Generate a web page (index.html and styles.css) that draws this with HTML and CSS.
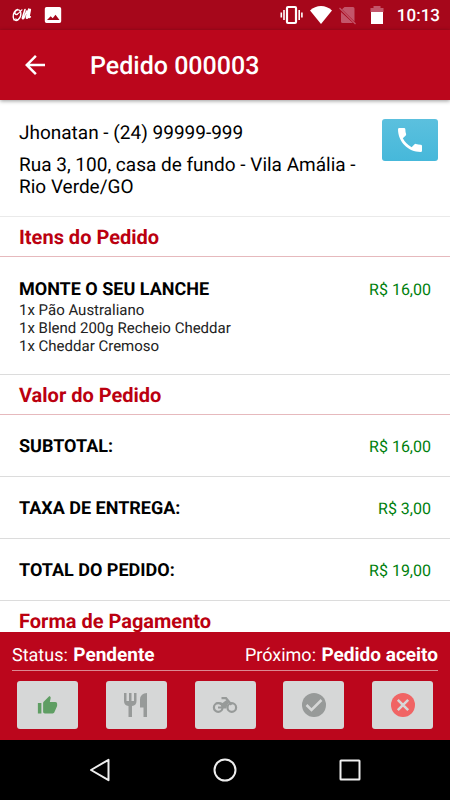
FILE: index.html
```html
<!DOCTYPE html>
<html lang="pt-BR">
<head>
<meta charset="utf-8">
<meta name="viewport" content="width=device-width, initial-scale=1">
<title>Pedido 000003</title>
<link rel="stylesheet" href="styles.css">
</head>
<body>
<div class="screen">
  <div class="status-bar">
    <div class="status-group">
      <svg class="logo" viewBox="0 0 20 16" fill="none" stroke="#fff" stroke-linecap="round" stroke-linejoin="round" aria-hidden="true">
        <path stroke-width="1.400" d="M5.500 2.500C3 3 1 6.500 1.200 10c.2 3.300 2.800 4.300 5 2.600C8.800 10.600 9.500 6.500 8.300 4 7.300 2.200 4.500 2.600 3.300 4.500 2.200 6.500 3.400 8 5.200 7.300"/>
        <path stroke-width="1.100" d="M5.200 7.300C7.500 6 8.500 4 10 2.800M1.800 12.800q2-1.500 3.500 0"/>
        <path stroke-width="1.600" d="M13 2.500 10.500 10.500c-.3 1.500.8 1.600 1.500.3L14.800 4M16.800 2 14.500 10c-.3 1.500.8 1.600 1.500.3L18.300 2.500 17 9.500c-.2 1 .5 1.200 1.300.3"/>
      </svg>
      <svg class="photo" viewBox="0 0 18 18" aria-hidden="true">
        <path fill="#fff" fill-rule="evenodd" d="M2.500 1h13A1.700 1.700 0 0 1 17.200 2.700v12.600a1.700 1.700 0 0 1-1.700 1.700h-13A1.700 1.700 0 0 1 .8 15.300V2.700A1.700 1.700 0 0 1 2.500 1zM3 14h12.500l-4-5.300-2.800 3.500-2-2z"/>
      </svg>
    </div>
    <div class="status-group status-right">
      <svg class="sys" viewBox="0 0 24 20" aria-hidden="true">
        <rect x="8" y="2" width="9" height="16" rx="1" fill="none" stroke="#fff" stroke-width="2.200"/>
        <path d="M5 5v10M20.200 5v10M2.300 7.500v5M22.900 7.500v5" stroke="#fff" stroke-width="1.600"/>
      </svg>
      <svg class="sys" viewBox="0 0 24 20" aria-hidden="true"><path fill="#fff" d="M2 5.500C8-.5 18-.5 24 5.500L13 19z"/></svg>
      <svg class="sys" viewBox="0 0 24 20" aria-hidden="true">
        <path fill="#c3566a" d="M7.500 2H16q1.500 0 1.500 1.500v13L5 4.200zM4 7l12 11H5.500Q4 18 4 16.500z"/>
        <path d="m2.500 3 16 16" stroke="#c3566a" stroke-width="1.300"/>
      </svg>
      <svg class="sys" viewBox="0 0 24 20" aria-hidden="true">
        <path fill="#c3566a" d="M7.500 1h7v2h3v4h-13V3h3z"/><path fill="#fff" d="M5 7h12v12H5z"/>
      </svg>
      <time class="clock">10:13</time>
    </div>
  </div>
  <header class="app-bar">
    <button class="back" type="button" aria-label="Voltar">
      <svg viewBox="0 0 24 24" aria-hidden="true"><path fill="#fff" d="M20 11H7.830l5.590-5.590L12 4l-8 8 8 8 1.410-1.410L7.830 13H20z"/></svg>
    </button>
    <h1>Pedido 000003</h1>
  </header>
  <main class="content">
    <section class="customer">
      <div class="customer-text">
        <p>Jhonatan - (24) 99999-999</p>
        <p>Rua 3, 100, casa de fundo - Vila Amália - Rio Verde/GO</p>
      </div>
      <button class="call" type="button" aria-label="Ligar">
        <svg viewBox="0 0 24 24" aria-hidden="true"><path fill="#fff" d="M20 15.500c-1.250 0-2.450-.2-3.570-.57a1 1 0 0 0-1.020.24l-2.200 2.200a15.050 15.050 0 0 1-6.590-6.590l2.200-2.210a.96.96 0 0 0 .25-1A11.360 11.360 0 0 1 8.500 4a1 1 0 0 0-1-1H4a1 1 0 0 0-1 1c0 9.390 7.610 17 17 17a1 1 0 0 0 1-1v-3.500a1 1 0 0 0-1-1z"/></svg>
      </button>
    </section>
    <section>
      <h2>Itens do Pedido</h2>
      <div class="row item">
        <div>
          <h3>MONTE O SEU LANCHE</h3>
          <ul>
            <li>1x Pão Australiano</li>
            <li>1x Blend 200g Recheio Cheddar</li>
            <li>1x Cheddar Cremoso</li>
          </ul>
        </div>
        <span class="price">R$ 16,00</span>
      </div>
    </section>
    <section>
      <h2>Valor do Pedido</h2>
      <div class="row"><h3>SUBTOTAL:</h3><span class="price">R$ 16,00</span></div>
      <div class="row"><h3>TAXA DE ENTREGA:</h3><span class="price">R$ 3,00</span></div>
      <div class="row"><h3>TOTAL DO PEDIDO:</h3><span class="price">R$ 19,00</span></div>
    </section>
    <section>
      <h2>Forma de Pagamento</h2>
    </section>
  </main>
  <footer class="order-status">
    <div class="status-line">
      <span>Status: <strong>Pendente</strong></span>
      <span>Próximo: <strong>Pedido aceito</strong></span>
    </div>
    <div class="actions">
      <button type="button" aria-label="Aceitar pedido">
        <svg class="small" viewBox="0 0 24 24" aria-hidden="true"><path fill="#5f9e63" d="M1 21h4V9H1v12zm22-11a2 2 0 0 0-2-2h-6.310l.95-4.570.03-.32c0-.41-.17-.79-.44-1.060L14.170 1 7.590 7.590A1.950 1.950 0 0 0 7 9v10c0 1.100.9 2 2 2h9c.83 0 1.540-.5 1.840-1.220l3.020-7.050c.09-.23.14-.47.14-.73v-2z"/></svg>
      </button>
      <button type="button" aria-label="Em preparo">
        <svg viewBox="0 0 24 24" aria-hidden="true"><path fill="#979a99" d="M0 0h2.500v8H5V0h2.500v8H10V0h2.500v8q0 4.500-4.500 5v11H4.500V13Q0 12.500 0 8zM23 0v24h-3.500v-9.500H16V6.500Q16.500 0 23 0z"/></svg>
      </button>
      <button type="button" aria-label="Saiu para entrega">
        <svg class="moto" viewBox="0 0 26 24" fill="none" stroke="#979a99" stroke-width="2.200" aria-hidden="true">
          <circle cx="6.200" cy="14.500" r="4.300"/><circle cx="19.800" cy="14.500" r="4.300"/>
          <path d="M6 14.500h4.500M9.500 5.200h4.500l5.500 6.500"/>
          <path fill="#979a99" stroke="none" d="M3 9.200h6l1.500.8L14.500 7l2.500 2.500q-2 2-2.800 6H10.500Q10 11.500 6 10.500z"/>
        </svg>
      </button>
      <button type="button" aria-label="Concluir pedido">
        <svg viewBox="0 0 24 24" aria-hidden="true"><circle cx="12" cy="12" r="12" fill="#979a99"/><path d="m4.500 12 5 5L19.500 7" fill="none" stroke="#d6d7d7" stroke-width="2.500"/></svg>
      </button>
      <button type="button" aria-label="Cancelar pedido">
        <svg viewBox="0 0 24 24" aria-hidden="true"><circle cx="12" cy="12" r="12" fill="#f06464"/><path d="m6.800 6.800 10.400 10.400M17.200 6.800 6.800 17.200" fill="none" stroke="#d6d7d7" stroke-width="2.500"/></svg>
      </button>
    </div>
  </footer>
  <nav class="nav-bar" aria-label="Sistema">
    <button type="button" aria-label="Voltar"><svg viewBox="0 0 24 24" aria-hidden="true"><path d="M3 12 20.500 1.800v20.400z"/></svg></button>
    <button type="button" aria-label="Início"><svg viewBox="0 0 24 24" aria-hidden="true"><circle cx="12" cy="12" r="10.500"/></svg></button>
    <button type="button" aria-label="Recentes"><svg viewBox="0 0 24 24" aria-hidden="true"><rect x="2.500" y="2.500" width="19" height="19" rx=".5"/></svg></button>
  </nav>
</div>
</body>
</html>
```

FILE: styles.css
```css
* { box-sizing: border-box; }

body {
  margin: 0;
  background: #fff;
  color: #000;
  font-family: Roboto, "Noto Sans", sans-serif;
  font-size: 18px;
  line-height: 22px;
  text-rendering: geometricPrecision;
}

h1, h2, h3, p, ul { margin: 0; padding: 0; }
ul { list-style: none; }
button { border: 0; padding: 0; font: inherit; cursor: pointer; }
svg { display: block; }

.screen {
  display: flex;
  flex-direction: column;
  height: 100vh;
  overflow: hidden;
}

.status-bar {
  display: flex;
  flex: none;
  justify-content: space-between;
  padding: 0 10px 0 12px;
  height: 30px;
  background: #a6071b;
  color: #fff;
}

.status-group { display: flex; align-items: center; gap: 12px; }
.status-right { gap: 5px; }
.logo { width: 20px; height: 16px; }
.photo { width: 18px; height: 18px; }
.sys { width: 24px; height: 20px; }
.clock { margin-left: 2px; padding-top: 2px; font-size: 17px; font-weight: 500; }

.app-bar {
  display: flex;
  flex: none;
  align-items: center;
  gap: 40px;
  height: 70px;
  padding: 0 20px;
  background: #bb061c;
  color: #fff;
  box-shadow: 0 1px 4px rgba(0, 0, 0, .4);
  z-index: 1;
}

.back { background: none; }
.back svg { width: 30px; height: 30px; }
h1 { padding-top: 3px; font-size: 25px; line-height: 30px; font-weight: 500; }

.content { flex: 1; min-height: 0; overflow: hidden; }

.customer {
  display: flex;
  justify-content: space-between;
  align-items: flex-start;
  gap: 12px;
  padding: 19px 12px 18px 19px;
  border-bottom: 1px solid #eaeaea;
}

.customer-text { flex: 1; padding-top: 3px; font-size: 19px; }
.customer-text p + p { margin-top: 10px; }

.call {
  display: grid;
  place-items: center;
  flex: none;
  width: 56px;
  height: 42px;
  border-radius: 3px;
  background: linear-gradient(#5bc0de, #46b8da);
}
.call svg { width: 32px; height: 32px; }

h2 {
  padding: 9px 19px 7px;
  border-bottom: 1px solid #e6b9bd;
  color: #bb0010;
  font-size: 20px;
  line-height: 23px;
  font-weight: 700;
}

.row {
  display: flex;
  justify-content: space-between;
  padding: 21px 19px 19px;
  border-bottom: 1px solid #dcdcdc;
  line-height: 21px;
}
.row h3 { font-size: 18px; font-weight: 700; }
.item { padding: 22px 19px 19px; }
.row ul { padding-top: 1px; }
.row li { color: #222; font-size: 15px; line-height: 18px; }
.price { color: #007f0e; font-size: 16px; }

.order-status {
  flex: none;
  padding: 12px 12px 11px;
  background: #bb061c;
  color: #fff;
}

.status-line {
  display: flex;
  justify-content: space-between;
  padding-bottom: 3px;
  border-bottom: 1px solid #dc8993;
}
.status-line strong { margin-left: 1px; font-size: 19px; }

.actions {
  display: flex;
  justify-content: space-between;
  padding: 10px 5px 0;
}
.actions button {
  display: grid;
  place-items: center;
  width: 61px;
  height: 48px;
  border-radius: 3px;
  background: #d6d7d7;
}
.actions svg { width: 24px; height: 24px; }
.actions .small { width: 21px; height: 21px; }
.actions .moto { width: 26px; }

.nav-bar {
  display: flex;
  flex: none;
  justify-content: center;
  gap: 101px;
  height: 60px;
  background: #000;
}
.nav-bar button { background: none; }
.nav-bar svg {
  width: 24px;
  height: 24px;
  fill: none;
  stroke: #eee;
  stroke-width: 2;
  stroke-linejoin: round;
}
```
